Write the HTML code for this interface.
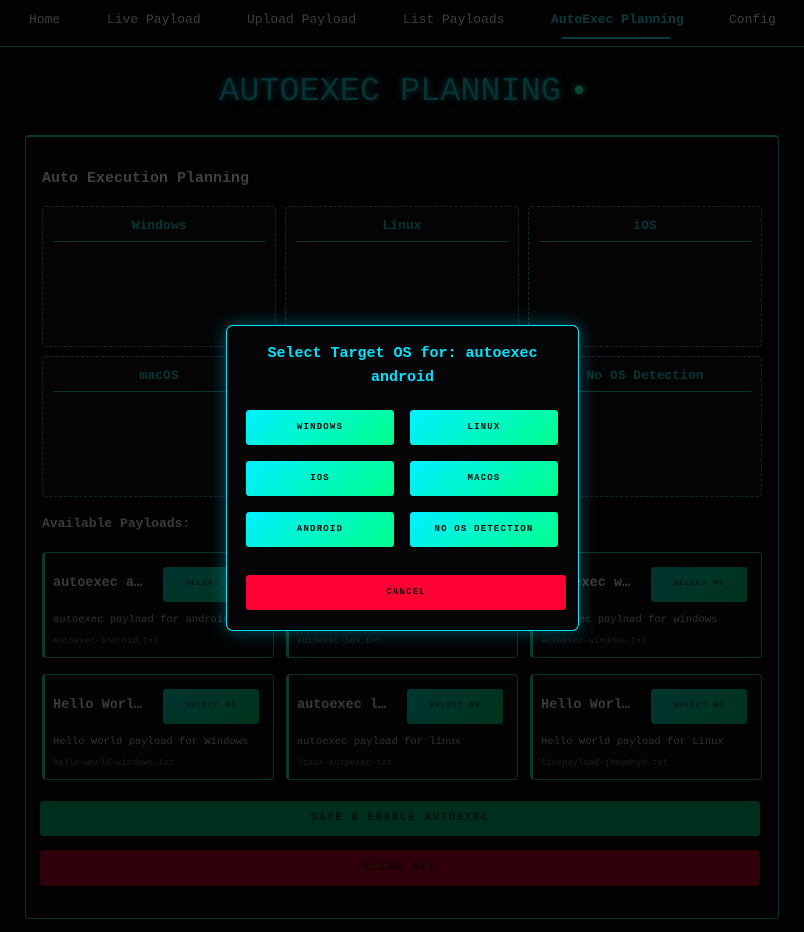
<!DOCTYPE html>
<html><head><meta charset="utf-8"><style>
*{margin:0;padding:0;box-sizing:border-box}
body{width:804px;height:932px;background:#020203;font-family:"Liberation Mono",monospace;position:relative;overflow:hidden}
.a{position:absolute}
.nav{font-size:13px;color:#3d3d3d;top:12px}
.zone{position:absolute;border:1px dashed #0c2a2a;border-radius:4px;background:#040405;width:234px;height:141px}
.zone .t{position:absolute;left:10px;right:10px;top:11px;height:24px;border-bottom:1px solid #0d3333;text-align:center;font-size:13px;font-weight:bold;color:#0a3535}
.card{position:absolute;width:232px;height:106px;border:1px solid #0a3030;border-left:3px solid #0a3a2e;border-radius:4px;background:#030304}
.card .h{position:absolute;left:8px;top:23px;font-size:13.5px;font-weight:bold;color:#3a3a3a;width:96px;white-space:nowrap;overflow:hidden;text-overflow:ellipsis}
.card .b{position:absolute;left:118px;top:14px;width:96px;height:35px;border-radius:3px;background:linear-gradient(135deg,#003530,#00331c);font-size:7px;font-weight:bold;letter-spacing:1.5px;color:#031010;text-align:center;line-height:35px}
.card .d{position:absolute;left:8px;top:61px;font-size:10.5px;color:#303030}
.card .f{position:absolute;left:8px;top:83px;font-size:8.8px;color:#1c1c1c}
.mb{position:absolute;width:148px;height:35px;border-radius:3px;background:linear-gradient(135deg,#00f0ff,#00ff8c);font-size:9px;font-weight:bold;letter-spacing:1.2px;color:#061010;text-align:center;line-height:35px}
</style></head><body>
<div class="a nav" style="left:29px">Home</div>
<div class="a nav" style="left:107px">Live Payload</div>
<div class="a nav" style="left:247px">Upload Payload</div>
<div class="a nav" style="left:403px">List Payloads</div>
<div class="a nav" style="left:551px;color:#0b3a3d;font-weight:bold">AutoExec Planning</div>
<div class="a nav" style="left:729px">Config</div>
<div class="a" style="left:562px;top:37px;width:108px;height:2px;background:#0b3a3d"></div>
<div class="a" style="left:0;top:46px;width:804px;height:1px;background:#0b3033"></div>
<div class="a" style="left:0;top:73px;width:804px;text-align:center;font-size:33.5px;color:#053336;text-shadow:0 0 8px #043030">AUTOEXEC PLANNING<span style="color:#064a2e;font-size:20px;vertical-align:middle"> ●</span></div>

<div class="a" style="left:25px;top:135px;width:754px;height:784px;border:1px solid #0a3033;border-top:2px solid #0b3a32;border-radius:4px;background:#020203"></div>
<div class="a" style="left:42px;top:170px;font-size:15px;font-weight:bold;color:#404040">Auto Execution Planning</div>

<div class="zone" style="left:42px;top:206px"><div class="t">Windows</div></div>
<div class="zone" style="left:285px;top:206px"><div class="t">Linux</div></div>
<div class="zone" style="left:528px;top:206px"><div class="t">iOS</div></div>
<div class="zone" style="left:42px;top:356px"><div class="t">macOS</div></div>
<div class="zone" style="left:285px;top:356px"><div class="t">Android</div></div>
<div class="zone" style="left:528px;top:356px"><div class="t">No OS Detection</div></div>

<div class="a" style="left:42px;top:516px;font-size:13px;font-weight:bold;color:#3a3a3a">Available Payloads:</div>

<div class="card" style="left:42px;top:552px"><div class="h">autoexec android</div><div class="b">SELECT OS</div><div class="d">autoexec payload for android</div><div class="f">autoexec-android.txt</div></div>
<div class="card" style="left:286px;top:552px"><div class="h">autoexec ios</div><div class="b">SELECT OS</div><div class="d">autoexec payload for ios</div><div class="f">autoexec-ios.txt</div></div>
<div class="card" style="left:530px;top:552px"><div class="h">autoexec windows</div><div class="b">SELECT OS</div><div class="d">autoexec payload for windows</div><div class="f">autoexec-windows.txt</div></div>
<div class="card" style="left:42px;top:674px"><div class="h">Hello World Windows</div><div class="b">SELECT OS</div><div class="d">Hello World payload for Windows</div><div class="f">hello-world-windows.txt</div></div>
<div class="card" style="left:286px;top:674px"><div class="h">autoexec linux</div><div class="b">SELECT OS</div><div class="d">autoexec payload for linux</div><div class="f">linux-autoexec.txt</div></div>
<div class="card" style="left:530px;top:674px"><div class="h">Hello World Linux</div><div class="b">SELECT OS</div><div class="d">Hello World payload for Linux</div><div class="f">livepayload-jhewmhyh.txt</div></div>

<div class="a" style="left:40px;top:801px;width:720px;height:35px;border-radius:3px;background:#002e1c;text-align:center;line-height:35px;font-size:11px;font-weight:bold;letter-spacing:1.5px;color:#021008">SAVE &amp; ENABLE AUTOEXEC</div>
<div class="a" style="left:40px;top:850px;width:720px;height:36px;border-radius:3px;background:#2e0009;text-align:center;line-height:36px;font-size:11px;font-weight:bold;letter-spacing:1.5px;color:#0c0002">CLEAR ALL</div>

<div class="a" style="left:226px;top:325px;width:353px;height:306px;background:#050508;border:1px solid #00e5ff;border-radius:7px;box-shadow:0 0 18px rgba(0,229,255,0.35)"></div>
<div class="a" style="left:226px;top:342px;width:353px;text-align:center;font-size:15px;font-weight:bold;color:#00e5ff;line-height:24px">Select Target OS for: autoexec<br>android</div>
<div class="mb" style="left:246px;top:410px">WINDOWS</div>
<div class="mb" style="left:410px;top:410px">LINUX</div>
<div class="mb" style="left:246px;top:461px">IOS</div>
<div class="mb" style="left:410px;top:461px">MACOS</div>
<div class="mb" style="left:246px;top:512px">ANDROID</div>
<div class="mb" style="left:410px;top:512px">NO OS DETECTION</div>
<div class="mb" style="left:246px;top:575px;width:320px;background:#ff0033;color:#1a0008">CANCEL</div>
</body></html>
